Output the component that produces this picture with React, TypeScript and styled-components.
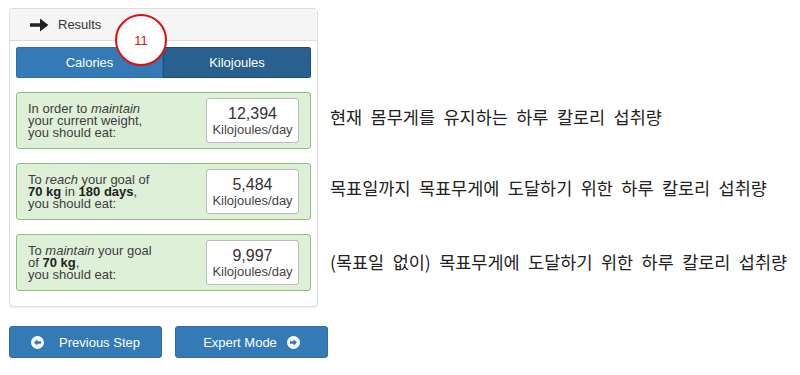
import styled, { createGlobalStyle } from "styled-components";

const GlobalStyle = createGlobalStyle`
  * { box-sizing: border-box; }
  body {
    margin: 0;
    background: #ffffff;
    font-family: "Liberation Sans", Arial, sans-serif;
    color: #333333;
  }
`;

// page split in the panel column and the note column
const Page = styled.div`
  display: grid;
  grid-template-columns: 309px 1fr;
  column-gap: 12px;
  padding: 8px 0 0 9px;
  width: 800px;
  height: 375px;
`;

const LeftColumn = styled.div`
  display: flex;
  flex-direction: column;
`;

const Panel = styled.div`
  position: relative;
  border: 1px solid #dddddd;
  border-radius: 4px;
  background: #ffffff;
  box-shadow: 0 1px 1px rgba(0, 0, 0, 0.05);
`;

const PanelHeading = styled.div`
  display: flex;
  align-items: center;
  gap: 9px;
  height: 32px;
  padding-left: 20px;
  background: #f5f5f5;
  border-bottom: 1px solid #dddddd;
  border-radius: 3px 3px 0 0;
  font-size: 13px;
  color: #333333;
`;

const PanelBody = styled.div`
  display: flex;
  flex-direction: column;
  gap: 14px;
  padding: 6px 6px 15px 6px;
`;

const Tabs = styled.div`
  display: flex;
  height: 31px;
  border-radius: 3px;
  overflow: hidden;
`;

const Tab = styled.div<{ $active?: boolean }>`
  flex: ${(p) => (p.$active ? "0 0 147px" : "1")};
  display: flex;
  align-items: center;
  justify-content: center;
  color: #ffffff;
  font-size: 13px;
  background: ${(p) => (p.$active ? "#337ab7" : "#28608f")};
  border: 1px solid ${(p) => (p.$active ? "#2e6da4" : "#204d74")};
`;

const StepBadge = styled.div`
  position: absolute;
  left: 105px;
  top: 5px;
  width: 52px;
  height: 52px;
  border-radius: 50%;
  border: 2px solid #e01010;
  background: #ffffff;
  color: #e01010;
  font-size: 13px;
  display: flex;
  align-items: center;
  justify-content: center;
  z-index: 2;
`;

const ResultCard = styled.div`
  display: flex;
  align-items: center;
  justify-content: space-between;
  height: 57px;
  padding: 0 11px 0 11px;
  background: #dff0d8;
  border: 1px solid #8dbf7d;
  border-radius: 3px;
`;

const CardText = styled.div`
  font-size: 13px;
  line-height: 12px;
  color: #3e3e3e;
  margin-top: 1px;

  b {
    color: #222222;
  }
`;

const ValueBox = styled.div`
  width: 93px;
  height: 45px;
  display: flex;
  flex-direction: column;
  align-items: center;
  justify-content: center;
  background: #ffffff;
  border: 1px solid #bbbbbb;
  border-radius: 3px;
  color: #333333;
`;

const ValueNumber = styled.div`
  font-size: 16px;
  line-height: 17px;
`;

const ValueUnit = styled.div`
  font-size: 13px;
  line-height: 15px;
  color: #444444;
`;

const ButtonRow = styled.div`
  display: flex;
  gap: 13px;
  margin-top: 19px;
`;

const StepButton = styled.button<{ $gap: number }>`
  flex: 0 0 153px;
  width: 153px;
  height: 32px;
  display: flex;
  align-items: center;
  justify-content: center;
  gap: ${(p) => p.$gap}px;
  background: #337ab7;
  border: 1px solid #2e6da4;
  border-radius: 3px;
  color: #ffffff;
  font-family: "Liberation Sans", Arial, sans-serif;
  font-size: 13px;
  padding: 0;
`;

const Notes = styled.div`
  display: flex;
  flex-direction: column;
  gap: 14px;
  padding-top: 84px;
`;

const Note = styled.div<{ $shift: number }>`
  height: 57px;
  display: flex;
  align-items: center;
  margin-top: ${(p) => p.$shift}px;
  font-family: "Noto Sans CJK KR", "Noto Sans", sans-serif;
  font-size: 17.5px;
  word-spacing: 4.5px;
  color: #222222;
  white-space: nowrap;
`;

function ArrowRight() {
  return (
    <svg width="19" height="14" viewBox="0 0 19 14">
      <path d="M0 5.2h10V0.6L18.4 7 10 13.4V8.8H0z" fill="#222222" />
    </svg>
  );
}

function CircleArrow(props: { dir: "left" | "right" }) {
  const d =
    props.dir === "left"
      ? "M3 6.5L6.4 3.2V5.2H10V7.8H6.4V9.8z"
      : "M10 6.5L6.6 3.2V5.2H3V7.8H6.6V9.8z";
  return (
    <svg width="13" height="13" viewBox="0 0 13 13">
      <circle cx="6.5" cy="6.5" r="6.5" fill="#ffffff" />
      <path d={d} fill="#337ab7" />
    </svg>
  );
}

const results = [
  {
    text: (
      <>
        In order to <i>maintain</i>
        <br />
        your current weight,
        <br />
        you should eat:
      </>
    ),
    value: "12,394",
  },
  {
    text: (
      <>
        To <i>reach</i> your goal of
        <br />
        <b>70 kg</b> in <b>180 days</b>,
        <br />
        you should eat:
      </>
    ),
    value: "5,484",
  },
  {
    text: (
      <>
        To <i>maintain</i> your goal
        <br />
        of <b>70 kg</b>,
        <br />
        you should eat:
      </>
    ),
    value: "9,997",
  },
];

const notes = [
  { text: "현재 몸무게를 유지하는 하루 칼로리 섭취량", shift: -4 },
  { text: "목표일까지 목표무게에 도달하기 위한 하루 칼로리 섭취량", shift: 0 },
  { text: "(목표일 없이) 목표무게에 도달하기 위한 하루 칼로리 섭취량", shift: 3 },
];

export default function App() {
  return (
    <>
      <GlobalStyle />
      <Page>
        <LeftColumn>
          <Panel>
            <PanelHeading>
              <ArrowRight />
              <span>Results</span>
            </PanelHeading>
            <StepBadge>11</StepBadge>
            <PanelBody>
              <Tabs>
                <Tab $active>Calories</Tab>
                <Tab>Kilojoules</Tab>
              </Tabs>
              {results.map((r) => (
                <ResultCard key={r.value}>
                  <CardText>{r.text}</CardText>
                  <ValueBox>
                    <ValueNumber>{r.value}</ValueNumber>
                    <ValueUnit>Kilojoules/day</ValueUnit>
                  </ValueBox>
                </ResultCard>
              ))}
            </PanelBody>
          </Panel>
          <ButtonRow>
            <StepButton $gap={15}>
              <CircleArrow dir="left" />
              Previous Step
            </StepButton>
            <StepButton $gap={10}>
              Expert Mode
              <CircleArrow dir="right" />
            </StepButton>
          </ButtonRow>
        </LeftColumn>
        <Notes>
          {notes.map((n) => (
            <Note key={n.text} $shift={n.shift}>
              {n.text}
            </Note>
          ))}
        </Notes>
      </Page>
    </>
  );
}
